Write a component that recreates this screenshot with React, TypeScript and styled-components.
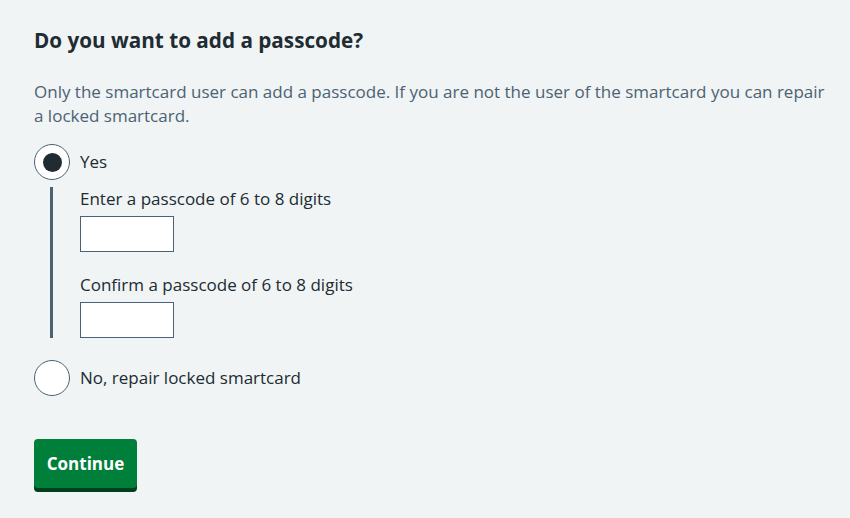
import React, { useState } from "react";
import styled, { createGlobalStyle } from "styled-components";

const GlobalStyle = createGlobalStyle`
    html, body {
        margin: 0;
        padding: 0;
        background-color: #f0f4f5;
        font-family: "Open Sans", "Noto Sans", Arial, sans-serif;
        color: #212b32;
    }
`

const Page = styled.div`
    padding: 24px 16px 24px 34px;
`

const Heading = styled.h1`
    margin: 0 0 24px 0;
    font-size: 20.7px;
    line-height: 32px;
    font-weight: 700;
    color: #212b32;
`

const Hint = styled.p`
    margin: 0 0 16px 0;
    font-size: 17px;
    line-height: 24px;
    color: #4c6272;
`

const RadioGroup = styled.div`
    display: flex;
    flex-direction: column;
`

const RadioRow = styled.label<{ $gapTop?: number }>`
    display: flex;
    align-items: center;
    gap: 10px;
    margin-top: ${({ $gapTop }) => $gapTop ?? 0}px;
    cursor: pointer;
    font-size: 17px;
    line-height: 24px;
    color: #212b32;
`

const RadioCircle = styled.span<{ $checked: boolean }>`
    box-sizing: border-box;
    width: 36px;
    height: 36px;
    border-radius: 50%;
    border: 1px solid #4c6272;
    background-color: #ffffff;
    display: flex;
    align-items: center;
    justify-content: center;
    &::after{
        content: "";
        width: 19px;
        height: 19px;
        border-radius: 50%;
        background-color: #212b32;
        display: ${({ $checked }) => ($checked ? "block" : "none")};
    }
`

const Conditional = styled.div`
    margin: 7px 0 0 16px;
    padding-left: 27px;
    border-left: 3px solid #4c6272;
    display: flex;
    flex-direction: column;
    gap: 21px;
`

const Field = styled.div`
    display: flex;
    flex-direction: column;
    align-items: flex-start;
    gap: 5px;
`

const FieldLabel = styled.label`
    font-size: 17px;
    line-height: 24px;
    color: #212b32;
`

const CodeInput = styled.input`
    box-sizing: border-box;
    width: 94px;
    height: 36px;
    border: 1px solid #4c6272;
    border-radius: 0;
    background: #ffffff;
    font-size: 16px;
    padding: 4px 8px;
    display: block;
    margin: 0;
`

const ContinueBtn = styled.button`
    margin-top: 43px;
    width: 103px;
    height: 49px;
    border: none;
    border-radius: 4px;
    background-color: #007f3b;
    box-shadow: 0 4px 0 #00401e;
    color: #ffffff;
    font-family: inherit;
    font-size: 17px;
    font-weight: 700;
    cursor: pointer;
`

export default function App(){
    const [choice, setChoice] = useState<"yes" | "no">("yes");

    return(
        <>
            <GlobalStyle/>
            <Page>
                <Heading>Do you want to add a passcode?</Heading>
                <Hint>Only the smartcard user can add a passcode. If you are not the user of the smartcard you can repair a locked smartcard.</Hint>
                <RadioGroup>
                    <RadioRow onClick={() => setChoice("yes")}>
                        <RadioCircle $checked={choice === "yes"}/>
                        Yes
                    </RadioRow>
                    {choice === "yes" &&
                    <Conditional>
                        <Field>
                            <FieldLabel htmlFor="passcode">Enter a passcode of 6 to 8 digits</FieldLabel>
                            <CodeInput id="passcode" type="password" inputMode="numeric"/>
                        </Field>
                        <Field>
                            <FieldLabel htmlFor="confirm">Confirm a passcode of 6 to 8 digits</FieldLabel>
                            <CodeInput id="confirm" type="password" inputMode="numeric"/>
                        </Field>
                    </Conditional>}
                    <RadioRow $gapTop={22} onClick={() => setChoice("no")}>
                        <RadioCircle $checked={choice === "no"}/>
                        No, repair locked smartcard
                    </RadioRow>
                </RadioGroup>
                <ContinueBtn>Continue</ContinueBtn>
            </Page>
        </>
    )
}
